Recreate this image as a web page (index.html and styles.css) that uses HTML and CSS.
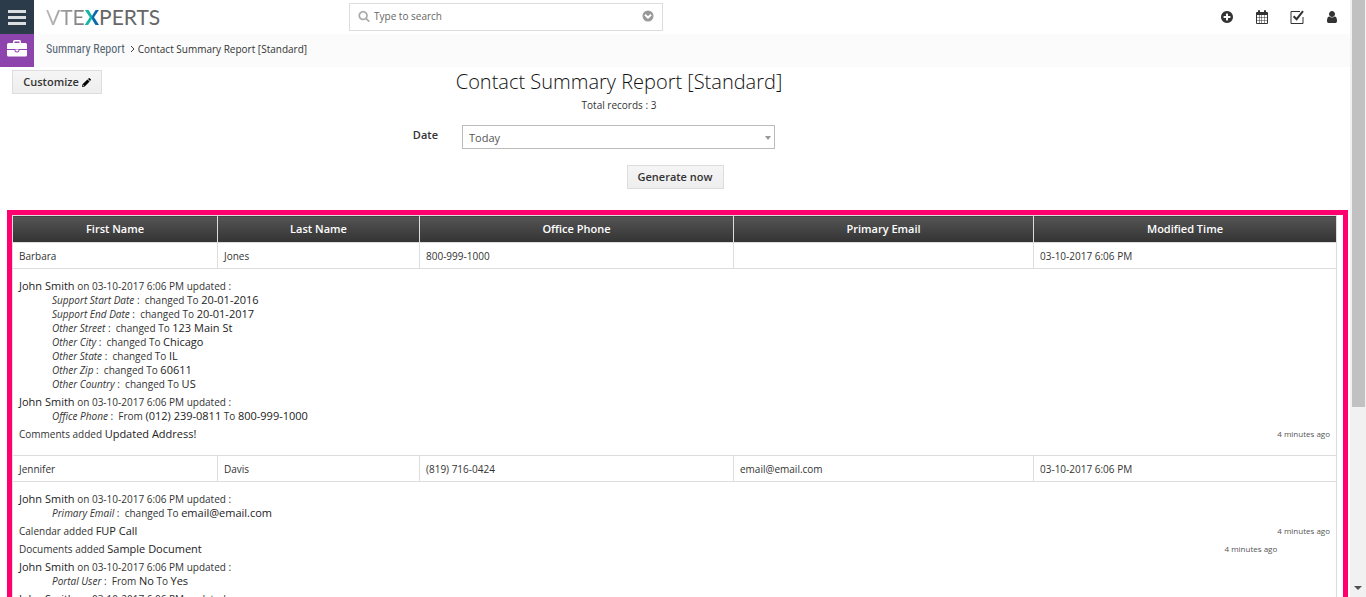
FILE: index.html
```html
<!DOCTYPE html>
<html lang="en">
<head>
  <meta charset="UTF-8" />
  <meta name="viewport" content="width=device-width, initial-scale=1.0"/>
  <title>Contact Summary Report [Standard]</title>
  <link rel="stylesheet" href="styles.css">
</head>
<body>
  <div class="page">
    <header class="topbar">
      <button class="menu-btn" type="button" aria-label="Menu"><span></span><span></span><span></span></button>
      <a class="logo" href="#"><span class="logo-vte">VTE</span><span class="logo-x">X</span><span class="logo-perts">PERTS</span></a>
      <form class="search">
        <svg class="search-icon" viewBox="0 0 1792 1792"><path d="M1216 832q0-185-131.5-316.5t-316.5-131.5-316.5 131.5-131.5 316.5 131.5 316.5 316.5 131.5 316.5-131.5 131.5-316.5zm512 832q0 52-38 90t-90 38q-54 0-90-38l-343-342q-179 124-399 124-143 0-273.5-55.5t-225-150-150-225-55.5-273.5 55.5-273.5 150-225 225-150 273.5-55.5 273.5 55.5 225 150 150 225 55.5 273.5q0 220-124 399l343 343q37 37 37 90z"/></svg>
        <input type="text" name="q" placeholder="Type to search" aria-label="Search" />
        <button type="button" aria-label="Advanced search">
          <svg viewBox="0 0 12 12"><circle cx="6" cy="6" r="5.5"/><path class="chevron" d="M3 4.7l3 3 3-3"/></svg>
        </button>
      </form>
      <nav class="tools">
        <a href="#" aria-label="Quick create"><svg viewBox="0 0 1792 1792"><path d="M1344 960v-128q0-26-19-45t-45-19h-256v-256q0-26-19-45t-45-19h-128q-26 0-45 19t-19 45v256h-256q-26 0-45 19t-19 45v128q0 26 19 45t45 19h256v256q0 26 19 45t45 19h128q26 0 45-19t19-45v-256h256q26 0 45-19t19-45zm320-64q0 209-103 385.5t-279.5 279.5-385.5 103-385.5-103-279.5-279.5-103-385.5 103-385.5 279.5-279.5 385.5-103 385.5 103 279.5 279.5 103 385.5z"/></svg></a>
        <a href="#" aria-label="Calendar"><svg viewBox="0 0 14 14"><path fill-rule="evenodd" d="M2 2h1V1q0-1 1-1t1 1v1h4V1q0-1 1-1t1 1v1h1q1 0 1 1v10q0 1-1 1H2q-1 0-1-1V3q0-1 1-1zM2 5v2h2V5zM4.500 5v2h2V5zM7 5v2h2.500V5zM10 5v2h2V5zM2 7.500v2.500h2v-2.500zM4.500 7.500v2.500h2v-2.500zM7 7.500v2.500h2.500v-2.500zM10 7.500v2.500h2v-2.500zM2 10.500v2.500h2v-2.500zM4.500 10.500v2.500h2v-2.500zM7 10.500v2.500h2.500v-2.500zM10 10.500v2.500h2v-2.500z"/></svg></a>
        <a class="tasks" href="#" aria-label="Tasks"><svg viewBox="0 0 14 14"><path class="line" d="M10 1.500H1v12h12V7"/><path class="tick" d="M3.600 6.200l3 3 6.400-8"/></svg></a>
        <a href="#" aria-label="Profile"><svg viewBox="0 0 1792 1792"><path d="M1536 1399q0 109-62.500 187t-150.500 78h-854q-88 0-150.500-78t-62.500-187q0-85 8.500-160.500t31.500-152 58.500-131 94-89 134.500-34.500q131 128 313 128t313-128q76 0 134.500 34.500t94 89 58.500 131 31.500 152 8.500 160.500zm-256-887q0 159-112.500 271.500t-271.500 112.500-271.500-112.500-112.500-271.500 112.500-271.500 271.500-112.500 271.500 112.500 112.500 271.500z"/></svg></a>
      </nav>
    </header>

    <div class="breadcrumb">
      <a class="module" href="#" aria-label="Reports">
        <svg viewBox="0 0 20 17"><path fill-rule="evenodd" d="M6 3V1.500Q6 0 7.500 0h5Q14 0 14 1.500V3h4.500Q20 3 20 4.500V9H0V4.500Q0 3 1.500 3zM7.500 3h5V1.500h-5z"/><path d="M0 10h7.500q0 2.500 2.500 2.500t2.500-2.500H20v5q0 1.500-1.500 1.500h-17Q0 16.500 0 15z"/><path d="M8.500 9.500h3v1.200q0 .8-1.500.8t-1.500-.8z"/></svg>
      </a>
      <div class="trail">
        <a class="crumb" href="#">Summary Report</a>
        <svg class="sep" viewBox="0 0 5 8"><path d="M1 1l3 3-3 3"/></svg>
        <span>Contact Summary Report [Standard]</span>
      </div>
    </div>

    <main>
      <div class="report-head">
        <button class="btn" type="button">Customize
          <svg viewBox="0 0 10 10"><path fill-rule="evenodd" d="M0 10l.6-3L6 1.600 8.400 4 3 9.400zM6.700 1L7.500.3q.5-.5 1 0l1.200 1.200q.5.500 0 1l-.8.800zM1.400 7.500l-.3 1.400 1.400-.3z"/></svg>
        </button>
        <div class="report-title">
          <h1>Contact Summary Report [Standard]</h1>
          <p>Total records : 3</p>
        </div>
      </div>

      <form class="filter">
        <div class="filter-row">
          <label for="date">Date</label>
          <div class="select">
            <select id="date" name="date">
              <option>Today</option>
            </select>
          </div>
        </div>
        <button class="btn" type="button">Generate now</button>
      </form>

      <div class="report-frame">
        <table>
          <colgroup>
            <col class="col-first"><col class="col-last"><col class="col-phone"><col class="col-email"><col>
          </colgroup>
          <thead>
            <tr><th>First Name</th><th>Last Name</th><th>Office Phone</th><th>Primary Email</th><th>Modified Time</th></tr>
          </thead>
          <tbody>
            <tr><td>Barbara</td><td>Jones</td><td>800-999-1000</td><td></td><td>03-10-2017 6:06 PM</td></tr>
            <tr>
              <td class="history" colspan="5">
                <div class="entry">
                  <b>John Smith</b> on 03-10-2017 6:06 PM updated :
                  <ul>
                    <li><i>Support Start Date</i> :&nbsp; changed To <b>20-01-2016</b></li>
                    <li><i>Support End Date</i> :&nbsp; changed To <b>20-01-2017</b></li>
                    <li><i>Other Street</i> :&nbsp; changed To <b>123 Main St</b></li>
                    <li><i>Other City</i> :&nbsp; changed To <b>Chicago</b></li>
                    <li><i>Other State</i> :&nbsp; changed To <b>IL</b></li>
                    <li><i>Other Zip</i> :&nbsp; changed To <b>60611</b></li>
                    <li><i>Other Country</i> :&nbsp; changed To <b>US</b></li>
                  </ul>
                </div>
                <div class="entry">
                  <b>John Smith</b> on 03-10-2017 6:06 PM updated :
                  <ul>
                    <li><i>Office Phone</i> :&nbsp; From <b>(012) 239-0811</b> To <b>800-999-1000</b></li>
                  </ul>
                </div>
                <div class="entry"><span class="ago">4 minutes ago</span>Comments added <b>Updated Address!</b></div>
              </td>
            </tr>
            <tr><td>Jennifer</td><td>Davis</td><td>(819) 716-0424</td><td>email@email.com</td><td>03-10-2017 6:06 PM</td></tr>
            <tr>
              <td class="history" colspan="5">
                <div class="entry">
                  <b>John Smith</b> on 03-10-2017 6:06 PM updated :
                  <ul>
                    <li><i>Primary Email</i> :&nbsp; changed To <b>email@email.com</b></li>
                  </ul>
                </div>
                <div class="entry"><span class="ago">4 minutes ago</span>Calendar added <b>FUP Call</b></div>
                <div class="entry"><span class="ago">4 minutes ago</span>Documents added <b>Sample Document</b></div>
                <div class="entry">
                  <b>John Smith</b> on 03-10-2017 6:06 PM updated :
                  <ul>
                    <li><i>Portal User</i> :&nbsp; From <b>No</b> To <b>Yes</b></li>
                  </ul>
                </div>
                <div class="entry"><b>John Smith</b> on 03-10-2017 6:06 PM updated :</div>
              </td>
            </tr>
          </tbody>
        </table>
      </div>
    </main>
  </div>

  <div class="scrollbar">
    <div class="thumb"></div>
    <div class="arrow"></div>
  </div>
</body>
</html>
```
FILE: styles.css
```css
* {
  box-sizing: border-box;
}

body {
  margin: 0;
  display: flex;
  height: 100vh;
  overflow: hidden;
  background: #fff;
  color: #333;
  font-family: "Open Sans", sans-serif;
  font-size: 10px;
  line-height: 14px;
}

a {
  color: inherit;
  text-decoration: none;
}

button,
input,
select {
  font-family: inherit;
}

.page {
  flex: 1;
  min-width: 0;
  overflow: hidden;
}

/* top bar */
.topbar {
  display: flex;
  align-items: center;
  height: 34px;
}

.menu-btn {
  display: flex;
  flex-direction: column;
  align-items: center;
  justify-content: center;
  gap: 3px;
  width: 34px;
  height: 34px;
  padding: 0;
  border: none;
  background: #2c3b49;
}

.menu-btn span {
  width: 18px;
  height: 3px;
  background: #dcdfe2;
}

.logo {
  width: 315px;
  padding-left: 12px;
  font-family: Lato, sans-serif;
  font-size: 21px;
  line-height: 34px;
  color: #666;
}

.logo-vte,
.logo-x {
  background: linear-gradient(90deg, #bbb, #777);
  -webkit-background-clip: text;
  background-clip: text;
  color: transparent;
}

.logo-x {
  background-image: linear-gradient(90deg, #13b5a6 45%, #0b69ad 55%);
  font-weight: 900;
}

.search {
  display: flex;
  align-items: center;
  width: 314px;
  height: 28px;
  padding: 0 8px 2px;
  border: 1px solid #ddd;
}

.search-icon {
  width: 12px;
  height: 12px;
  fill: #aaa;
}

.search input {
  flex: 1;
  min-width: 0;
  padding: 0 4px;
  border: none;
  outline: none;
  background: none;
  font-size: 10px;
}

.search input::placeholder {
  color: #666;
}

.search button {
  display: flex;
  padding: 0;
  border: none;
  background: none;
}

.search button svg {
  width: 12px;
  height: 12px;
  fill: #999;
}

.search .chevron {
  fill: none;
  stroke: #fff;
  stroke-width: 2;
}

.tools {
  display: flex;
  align-items: center;
  gap: 21px;
  margin-left: auto;
  padding-right: 11px;
}

.tools a {
  display: flex;
}

.tools svg {
  width: 14px;
  height: 14px;
  fill: #333;
}

.tools .line,
.tools .tick {
  fill: none;
  stroke: #333;
}

.tools .tick {
  stroke-width: 2;
}

/* breadcrumb */
.breadcrumb {
  display: flex;
  height: 33px;
  background: #fbfbfb;
}

.module {
  display: flex;
  align-items: center;
  justify-content: center;
  width: 34px;
  height: 33px;
  padding-bottom: 4px;
  background: #8e44ad;
}

.module svg {
  width: 20px;
  height: 17px;
  fill: #fff;
}

.trail {
  display: flex;
  align-items: center;
  padding: 0 0 3px 12px;
}

.crumb {
  color: #566573;
  font-family: "Liberation Sans Narrow", "Roboto Condensed", "Liberation Sans", sans-serif;
  font-size: 12px;
}

.sep {
  width: 5px;
  height: 8px;
  margin: 0 3px 0 5px;
  fill: none;
  stroke: #444;
}

/* report header */
.report-head {
  display: grid;
  grid-template-columns: 90px 1fr;
  align-items: start;
  padding: 3px 214px 0 12px;
}

.btn {
  height: 24px;
  padding: 0 10px 2px;
  border: 1px solid #ddd;
  background: linear-gradient(#f5f5f5, #eee);
  color: #333;
  font-size: 11px;
  font-weight: 600;
  white-space: nowrap;
}

.btn svg {
  width: 9px;
  height: 9px;
  vertical-align: -1px;
}

.report-title {
  text-align: center;
}

.report-title h1 {
  margin: 0;
  color: #111;
  font-size: 20px;
  font-weight: 300;
  line-height: 24px;
}

.report-title p {
  margin: 4px 0 0;
}

/* filter */
.filter {
  margin-top: 13px;
  text-align: center;
}

.filter-row {
  display: flex;
  gap: 24px;
  margin-bottom: 16px;
}

.filter-row label {
  width: 438px;
  padding-top: 3px;
  font-size: 11px;
  font-weight: 600;
  text-align: right;
}

.select {
  position: relative;
  width: 313px;
}

.select::after {
  content: "";
  position: absolute;
  top: 11px;
  right: 4px;
  border: 3px solid transparent;
  border-top: 4px solid #999;
  border-bottom: none;
}

.select select {
  display: block;
  appearance: none;
  width: 100%;
  height: 24px;
  padding: 0 6px;
  border: 1px solid #bbb;
  border-radius: 0;
  background: #fff;
  color: #555;
  font-size: 11px;
}

/* report table */
.report-frame {
  margin: 21px 2px 0 7px;
  padding-right: 6px;
  border: 5px solid #ff006e;
}

table {
  width: 100%;
  table-layout: fixed;
  border-collapse: collapse;
}

.col-first {
  width: 205px;
}

.col-last {
  width: 202px;
}

.col-phone {
  width: 314px;
}

.col-email {
  width: 300px;
}

th,
td {
  height: 26px;
  padding: 0 6px;
  border: 1px solid #ddd;
}

th {
  height: 27px;
  background: linear-gradient(#555, #333);
  color: #fff;
  font-size: 11px;
  font-weight: 600;
}

td {
  text-align: left;
}

.history {
  padding: 10px 6px 8px;
  vertical-align: top;
}

.entry {
  margin-bottom: 4px;
}

.entry:last-child {
  margin-bottom: 0;
}

.entry b {
  color: #222;
  font-size: 11px;
  font-weight: 500;
}

.entry ul {
  margin: 0;
  padding-left: 33px;
  list-style: none;
}

/* taller than its line, so a stamp on the next line sits beside it */
.ago {
  float: right;
  padding-bottom: 6px;
  color: #555;
  font-size: 8px;
}

/* scrollbar */
.scrollbar {
  display: flex;
  flex-direction: column;
  align-items: center;
  justify-content: space-between;
  width: 16px;
  padding-bottom: 7px;
  background: #f1f1f1;
}

.thumb {
  width: 13px;
  height: 69%;
  background: #c1c1c1;
}

.arrow {
  border: 4px solid transparent;
  border-top-color: #505050;
  border-bottom: none;
}
```
